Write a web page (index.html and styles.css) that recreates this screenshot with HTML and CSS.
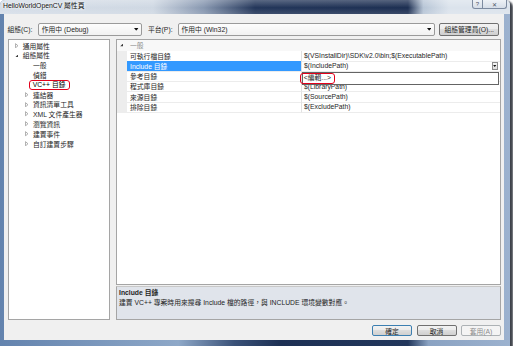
FILE: index.html
```html
<!DOCTYPE html>
<html lang="zh-Hant">
<head>
    <meta charset="UTF-8">
    <title>HelloWorldOpenCV 屬性頁</title>
    <link rel="stylesheet" href="styles.css">
</head>
<body>
    <svg class="defs" width="0" height="0">
        <symbol id="tri-closed" viewBox="0 0 4 6"><path d="M0.6 0.6 L3.4 3 L0.6 5.4 Z" fill="none" stroke="#8f8f8f" stroke-width="0.8"/></symbol>
        <symbol id="tri-open" viewBox="0 0 4 4"><path d="M4 0 L4 4 L0 4 Z" fill="#3a3a3a"/></symbol>
        <symbol id="tri-down" viewBox="0 0 5 3"><path d="M0 0 H5 L2.5 3 Z" fill="#111"/></symbol>
    </svg>

    <div class="window">
        <div class="titlebar">
            <span class="title">HelloWorldOpenCV 屬性頁</span>
            <div class="caption">
                <span class="cap-btn cap-help">?</span>
                <span class="cap-btn cap-close">✕</span>
            </div>
        </div>

        <div class="client">
            <!-- 組態 / 平台 選擇列 -->
            <div class="toolbar">
                <label class="tb-label tb-config">組態(C):</label>
                <div class="combo combo-config">
                    <span>作用中 (Debug)</span>
                    <svg class="combo-arrow"><use href="#tri-down"/></svg>
                </div>
                <label class="tb-label tb-platform">平台(P):</label>
                <div class="combo combo-platform">
                    <span>作用中 (Win32)</span>
                    <svg class="combo-arrow"><use href="#tri-down"/></svg>
                </div>
                <button class="btn btn-manager">組態管理員(O)...</button>
            </div>

            <div class="main">
                <!-- 左側樹狀清單 -->
                <div class="tree">
                    <div class="tree-row lvl0"><span class="exp"><svg class="tri-closed"><use href="#tri-closed"/></svg></span><span>通用屬性</span></div>
                    <div class="tree-row lvl0"><span class="exp"><svg class="tri-open"><use href="#tri-open"/></svg></span><span>組態屬性</span></div>
                    <div class="tree-row lvl1"><span class="exp"></span><span>一般</span></div>
                    <div class="tree-row lvl1"><span class="exp"></span><span>偵錯</span></div>
                    <div class="tree-row lvl1"><span class="exp"></span><span class="mark mark-tree">VC++ 目錄</span></div>
                    <div class="tree-row lvl1"><span class="exp"><svg class="tri-closed"><use href="#tri-closed"/></svg></span><span>連結器</span></div>
                    <div class="tree-row lvl1"><span class="exp"><svg class="tri-closed"><use href="#tri-closed"/></svg></span><span>資訊清單工具</span></div>
                    <div class="tree-row lvl1"><span class="exp"><svg class="tri-closed"><use href="#tri-closed"/></svg></span><span>XML 文件產生器</span></div>
                    <div class="tree-row lvl1"><span class="exp"><svg class="tri-closed"><use href="#tri-closed"/></svg></span><span>瀏覽資訊</span></div>
                    <div class="tree-row lvl1"><span class="exp"><svg class="tri-closed"><use href="#tri-closed"/></svg></span><span>建置事件</span></div>
                    <div class="tree-row lvl1"><span class="exp"><svg class="tri-closed"><use href="#tri-closed"/></svg></span><span>自訂建置步驟</span></div>
                </div>

                <!-- 右側屬性表 -->
                <div class="right">
                    <div class="grid">
                        <div class="grid-cat">
                            <span class="cat-toggle"><svg class="tri-open"><use href="#tri-open"/></svg></span>
                            <span class="cat-name">一般</span>
                        </div>
                        <div class="grid-row">
                            <span class="gutter"></span>
                            <span class="prop-name">可執行檔目錄</span>
                            <span class="prop-value">$(VSInstallDir)\SDK\v2.0\bin;$(ExecutablePath)</span>
                        </div>
                        <div class="grid-row selected">
                            <span class="gutter"></span>
                            <span class="prop-name">Include 目錄</span>
                            <span class="prop-value">
                                <span>$(IncludePath)</span>
                                <span class="dd-btn"><svg class="dd-arrow"><use href="#tri-down"/></svg></span>
                            </span>
                        </div>
                        <div class="grid-row">
                            <span class="gutter"></span>
                            <span class="prop-name">參考目錄</span>
                            <span class="prop-value"></span>
                        </div>
                        <div class="grid-row">
                            <span class="gutter"></span>
                            <span class="prop-name">程式庫目錄</span>
                            <span class="prop-value">$(LibraryPath)</span>
                        </div>
                        <div class="grid-row">
                            <span class="gutter"></span>
                            <span class="prop-name">來源目錄</span>
                            <span class="prop-value">$(SourcePath)</span>
                        </div>
                        <div class="grid-row">
                            <span class="gutter"></span>
                            <span class="prop-name">排除目錄</span>
                            <span class="prop-value">$(ExcludePath)</span>
                        </div>

                        <!-- 下拉選單 -->
                        <div class="dropdown">
                            <span class="mark mark-edit">&lt;編輯...&gt;</span>
                        </div>
                    </div>

                    <div class="desc">
                        <div class="desc-title">Include 目錄</div>
                        <div>建置 VC++ 專案時用來搜尋 Include 檔的路徑，與 INCLUDE 環境變數對應。</div>
                    </div>
                </div>
            </div>

            <div class="buttons">
                <button class="btn btn-default">確定</button>
                <button class="btn">取消</button>
                <button class="btn" disabled>套用(A)</button>
            </div>
        </div>
    </div>
</body>
</html>
```

FILE: styles.css
```css
body {
    margin: 0;
    background: #fff;
    font-family: "Liberation Sans", "Noto Sans CJK TC", sans-serif;
    font-size: 6.8px;
    color: #1e1e1e;
}

.defs {
    display: block;
    width: 0;
    height: 0;
}

/* 視窗外框 */
.window {
    width: 510px;
    height: 346px;
    box-sizing: border-box;
    padding: 0 6.5px 6px 4px;
    display: flex;
    flex-direction: column;
    background: linear-gradient(90deg,
        #6383ae 0,
        #8ea8c8 35%,
        #3a5178 46%,
        #1d3054 55%,
        #22375c 80%,
        #8aa2c2 84%,
        #9cb2cf 100%
    );
    border-radius: 5px 5px 0 0;
    box-shadow: 2px 2px 2px 1px rgba(15, 20, 30, 0.8);
}

.titlebar {
    height: 14px;
    margin: 0 -6.5px 0 -4px;
    display: flex;
    justify-content: space-between;
    align-items: flex-start;
    border-radius: 5px 5px 0 0;
    background:
        linear-gradient(180deg, rgba(255, 255, 255, 0.25), rgba(255, 255, 255, 0) 55%, rgba(255, 255, 255, 0.12)),
        linear-gradient(90deg,
            #d6dee8 0,
            #cfd8e3 30%,
            #8797b0 40%,
            #23365a 50%,
            #1d2f52 80%,
            #b7c5d6 83%,
            #dbe3ec 88%,
            #dbe3ec 100%
        );
}

.title {
    padding: 1.5px 0 0 3px;
    line-height: 7px;
    color: #111;
    text-shadow: 0 0 3px #fff, 0 0 3px #fff;
}

.caption {
    display: flex;
    margin-right: 3px;
}

.cap-btn {
    height: 9px;
    box-sizing: border-box;
    display: flex;
    align-items: center;
    justify-content: center;
    font-size: 6px;
    color: #4f5867;
    border: 1px solid #7d8ba0;
    border-top: none;
    background: linear-gradient(#eef2f6, #d6dee8);
}

.cap-help {
    width: 11px;
    border-radius: 0 0 0 3px;
}

.cap-close {
    width: 24px;
    border-left: none;
    border-radius: 0 0 3px 0;
}

/* 內容區 */
.client {
    flex: 1;
    background: #f0f0f0;
    padding: 8.5px 2.5px 0 3.5px;
    display: flex;
    flex-direction: column;
}

.toolbar {
    height: 13.5px;
    display: flex;
    align-items: center;
}

.tb-config {
    width: 30.5px;
}

.tb-platform {
    width: 29.7px;
    margin-left: 6px;
}

.combo {
    height: 13.5px;
    box-sizing: border-box;
    display: flex;
    align-items: center;
    justify-content: space-between;
    padding: 0 2.5px 0 2.7px;
    border: 1px solid #9a9a9a;
    border-radius: 2px;
    background: linear-gradient(#fdfdfd, #f1f1f1);
}

.combo-config {
    width: 104px;
}

.combo-platform {
    width: 257px;
}

.combo-arrow {
    width: 4.5px;
    height: 2.7px;
}

.btn {
    font: inherit;
    color: #1e1e1e;
    padding: 0;
    height: 11.5px;
    width: 40px;
    box-sizing: border-box;
    border: 1px solid #707070;
    border-radius: 2px;
    background: linear-gradient(#f2f2f2 0, #ebebeb 50%, #dddddd 50%, #cfcfcf 100%);
}

.btn-manager {
    width: 60px;
    height: 12.5px;
    margin-left: 4.5px;
}

.btn-default {
    border-color: #3c7fb1;
}

.btn[disabled] {
    color: #8d8d8d;
    border-color: #adb2b5;
    background: #f4f4f4;
}

.main {
    height: 281px;
    margin-top: 2.5px;
    display: flex;
    gap: 6px;
}

/* 樹狀清單 */
.tree {
    width: 102.5px;
    box-sizing: border-box;
    border: 1px solid #a5a5a5;
    background: #fff;
    padding-top: 1.2px;
}

.tree-row {
    height: 9.8px;
    display: flex;
    align-items: center;
    white-space: nowrap;
}

.lvl0 {
    padding-left: 6px;
}

.lvl1 {
    padding-left: 16.3px;
}

.exp {
    width: 8.2px;
    flex-shrink: 0;
    display: flex;
    align-items: center;
}

.tri-closed {
    width: 3.5px;
    height: 5.5px;
}

.tri-open {
    width: 3.5px;
    height: 3.5px;
}

.mark {
    border: 1.3px solid #e3001b;
    border-radius: 3px;
    line-height: 8.4px;
}

.mark-tree {
    margin-left: -4px;
    padding: 0 3px 0 2.7px;
    color: #000;
}

/* 屬性表 */
.right {
    flex: 1;
    display: flex;
    flex-direction: column;
}

.grid {
    height: 246px;
    flex-shrink: 0;
    box-sizing: border-box;
    position: relative;
    border: 1px solid #a5a5a5;
    background: #fff;
}

.grid-cat {
    height: 11px;
    display: flex;
    align-items: center;
    background: #f8f8f8;
}

.cat-toggle {
    width: 13px;
    box-sizing: border-box;
    padding-left: 2.7px;
    display: flex;
    align-items: center;
}

.cat-name {
    color: #8c8c8c;
}

.grid-row {
    height: 10.3px;
    display: grid;
    grid-template-columns: 10px 174.5px 1fr;
}

.gutter {
    background: #ededed;
}

.prop-name,
.prop-value {
    display: flex;
    align-items: center;
    box-sizing: border-box;
    border-bottom: 1px solid #ececec;
    white-space: nowrap;
}

.prop-name {
    padding-left: 3px;
    border-right: 1px solid #e2e2e2;
}

.prop-value {
    padding: 0 2px 0 2.5px;
    justify-content: space-between;
}

.selected .prop-name {
    background: #3399ff;
    color: #fff;
}

.dd-btn {
    width: 6.5px;
    height: 7.5px;
    box-sizing: border-box;
    display: flex;
    align-items: center;
    justify-content: center;
    border: 1px solid #8c8c8c;
    background: linear-gradient(#f6f6f6, #dedede);
}

.dd-arrow {
    width: 3.5px;
    height: 2px;
}

.dropdown {
    position: absolute;
    left: 184.7px;
    top: 32.2px;
    width: 197.3px;
    height: 13.3px;
    box-sizing: border-box;
    display: flex;
    align-items: center;
    border: 1px solid #646464;
    background: #fff;
}

.mark-edit {
    margin-left: -2.7px;
    padding: 0 3.5px 0 2.7px;
}

/* 說明區 */
.desc {
    flex: 1;
    margin-top: 1.5px;
    padding: 0.5px 2px;
    line-height: 10.6px;
    background: #e0e4eb;
    border: 1px solid #a5a5a5;
    border-top-color: #c8c8c8;
    white-space: nowrap;
}

.desc-title {
    font-weight: bold;
}

.buttons {
    display: flex;
    justify-content: flex-end;
    gap: 4.5px;
    margin-top: 5px;
}
```
